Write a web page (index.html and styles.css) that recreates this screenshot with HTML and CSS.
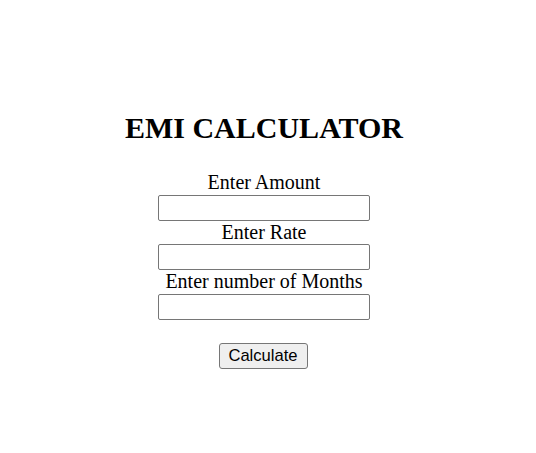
FILE: index.html
```html
<!DOCTYPE html>
<html>
<head>
<meta charset="utf-8">
<link rel="stylesheet" href="styles.css">
</head>
<body>
<div class="page">
  <h2 class="title">EMI CALCULATOR</h2>
  <form class="form">
    <label class="label">Enter Amount</label>
    <input class="field" type="text">
    <label class="label">Enter Rate</label>
    <input class="field" type="text">
    <label class="label">Enter number of Months</label>
    <input class="field" type="text">
    <button class="btn" type="button">Calculate</button>
  </form>
</div>
</body>
</html>
```
FILE: styles.css
```css
html, body {
  margin: 0;
  padding: 0;
  background: #fff;
}
.page {
  width: 528px;
  padding-top: 111px;
  font-family: "Liberation Serif", "Times New Roman", serif;
  color: #000;
  text-align: center;
}
.title {
  margin: 0 0 26px;
  font-size: 30px;
  font-weight: bold;
  line-height: 34px;
}
.form {
  display: flex;
  flex-direction: column;
  align-items: center;
}
.label {
  display: block;
  font-size: 20px;
  line-height: 23.5px;
}
.field {
  box-sizing: border-box;
  width: 212px;
  height: 26px;
  margin: 0;
  border: 1px solid #767676;
  border-radius: 2px;
  background: #fff;
  padding: 1px 2px;
}
.btn {
  box-sizing: border-box;
  margin: 23px 2px 0 0;
  height: 26px;
  width: 89px;
  padding: 0;
  font-family: "Liberation Sans", Arial, sans-serif;
  font-size: 16.6px;
  color: #000;
  background: #efefef;
  border: 1px solid #767676;
  border-radius: 3px;
}
```
